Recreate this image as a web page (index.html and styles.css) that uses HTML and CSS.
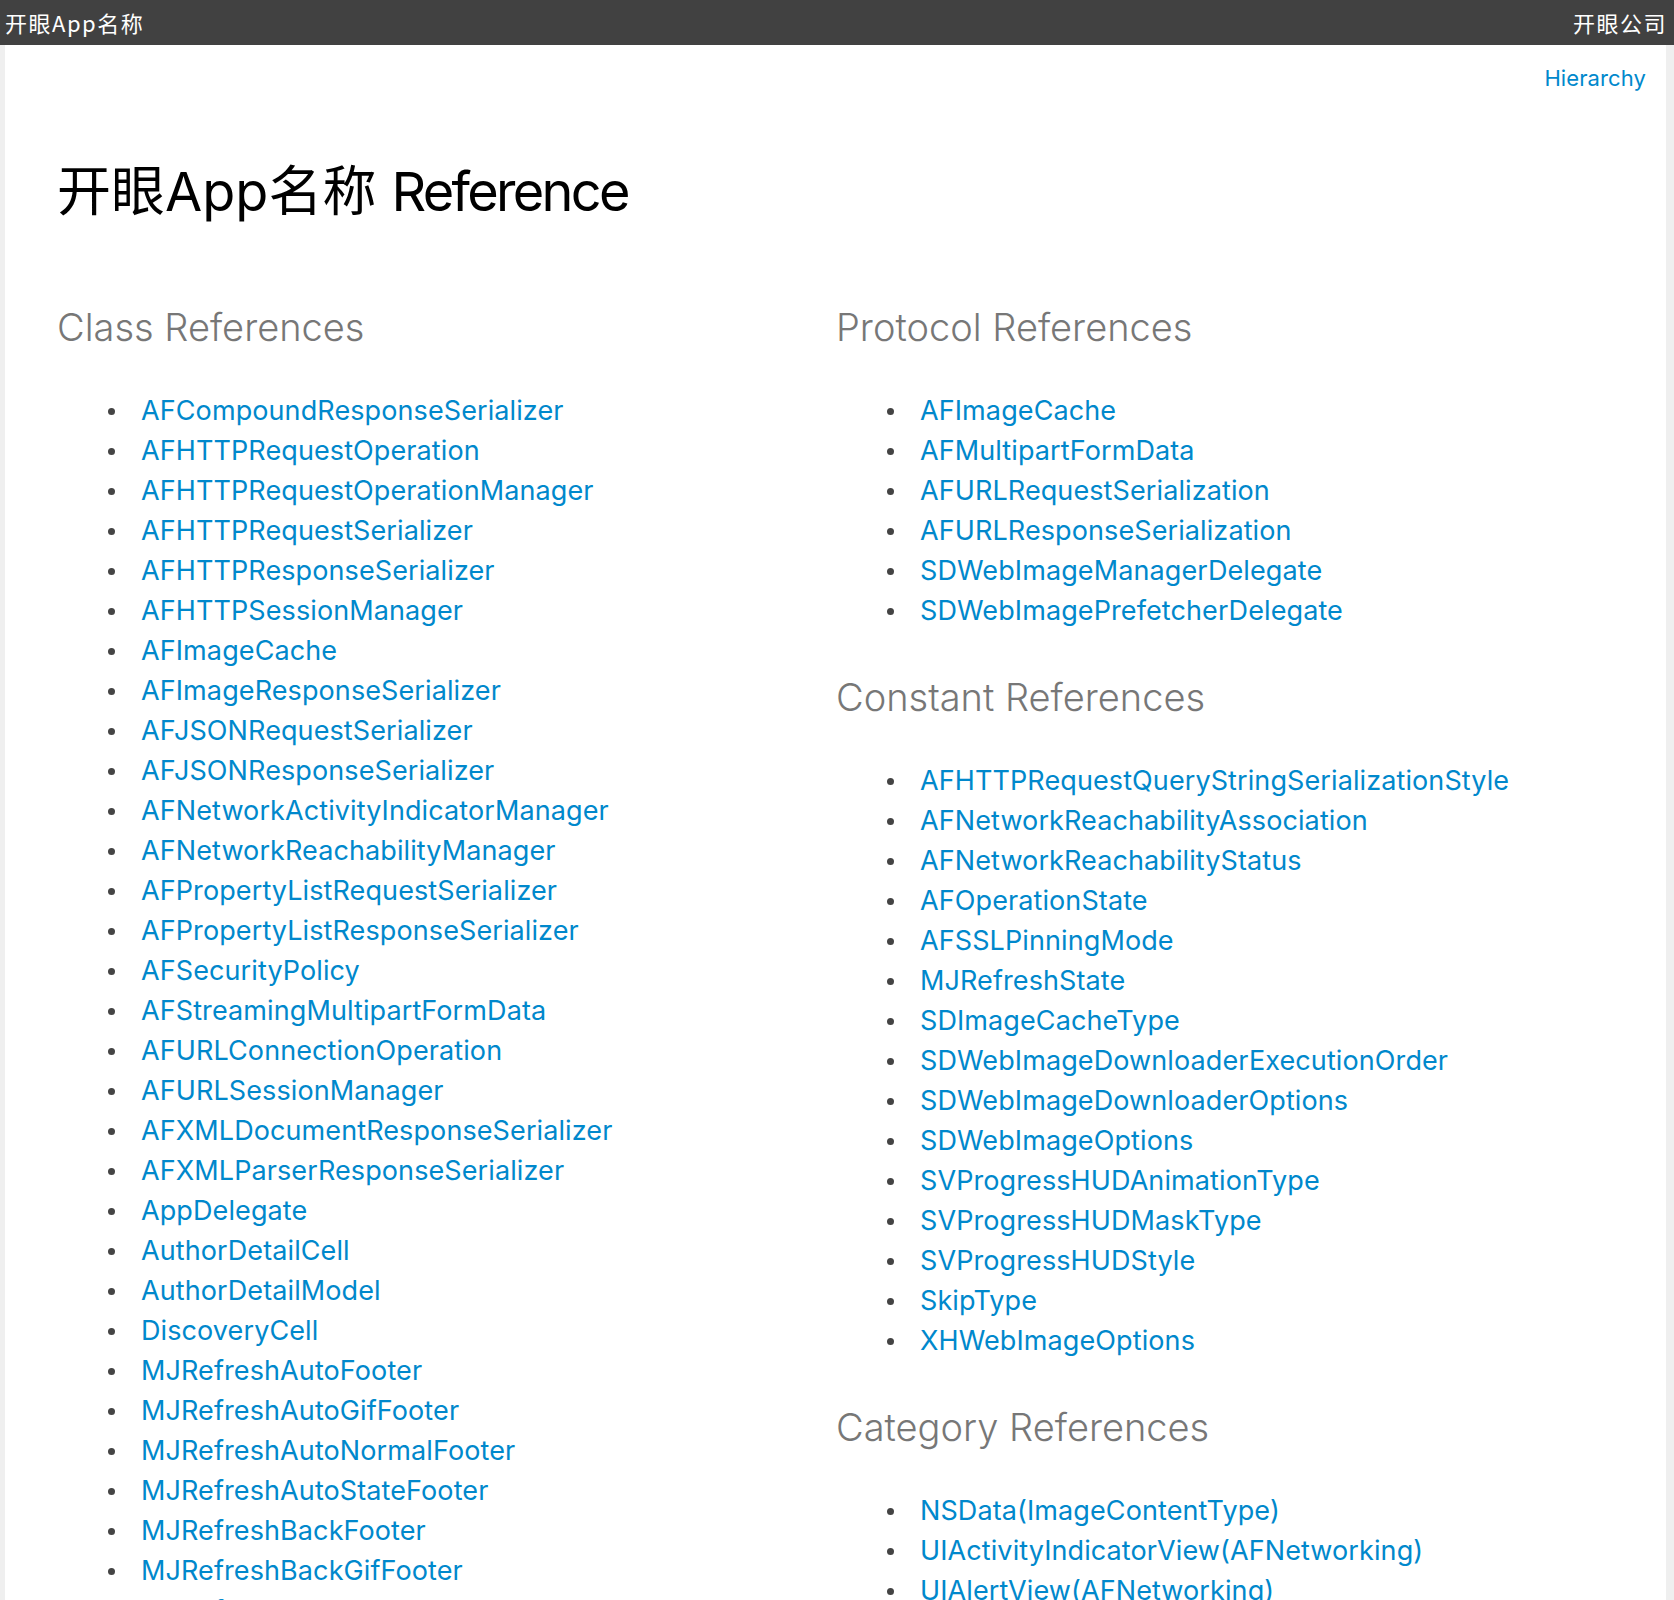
FILE: index.html
```html
<!DOCTYPE html>
<html lang="zh-CN">
<head>
<meta charset="utf-8">
<title>开眼App名称 Reference</title>
<link rel="stylesheet" href="styles.css">
</head>
<body>
<header class="topbar">
  <span class="topbar-title">开眼App名称</span>
  <span class="topbar-company">开眼公司</span>
</header>
<div class="page">
  <nav class="subnav"><a href="#">Hierarchy</a></nav>
  <main class="content">
    <h1 class="doc-title">开眼App名称 <span class="latin">Reference</span></h1>
    <div class="columns">
      <section class="column">
        <h2 class="section-title">Class References</h2>
        <ul class="ref-list">
          <li><a href="#">AFCompoundResponseSerializer</a></li>
          <li><a href="#">AFHTTPRequestOperation</a></li>
          <li><a href="#">AFHTTPRequestOperationManager</a></li>
          <li><a href="#">AFHTTPRequestSerializer</a></li>
          <li><a href="#">AFHTTPResponseSerializer</a></li>
          <li><a href="#">AFHTTPSessionManager</a></li>
          <li><a href="#">AFImageCache</a></li>
          <li><a href="#">AFImageResponseSerializer</a></li>
          <li><a href="#">AFJSONRequestSerializer</a></li>
          <li><a href="#">AFJSONResponseSerializer</a></li>
          <li><a href="#">AFNetworkActivityIndicatorManager</a></li>
          <li><a href="#">AFNetworkReachabilityManager</a></li>
          <li><a href="#">AFPropertyListRequestSerializer</a></li>
          <li><a href="#">AFPropertyListResponseSerializer</a></li>
          <li><a href="#">AFSecurityPolicy</a></li>
          <li><a href="#">AFStreamingMultipartFormData</a></li>
          <li><a href="#">AFURLConnectionOperation</a></li>
          <li><a href="#">AFURLSessionManager</a></li>
          <li><a href="#">AFXMLDocumentResponseSerializer</a></li>
          <li><a href="#">AFXMLParserResponseSerializer</a></li>
          <li><a href="#">AppDelegate</a></li>
          <li><a href="#">AuthorDetailCell</a></li>
          <li><a href="#">AuthorDetailModel</a></li>
          <li><a href="#">DiscoveryCell</a></li>
          <li><a href="#">MJRefreshAutoFooter</a></li>
          <li><a href="#">MJRefreshAutoGifFooter</a></li>
          <li><a href="#">MJRefreshAutoNormalFooter</a></li>
          <li><a href="#">MJRefreshAutoStateFooter</a></li>
          <li><a href="#">MJRefreshBackFooter</a></li>
          <li><a href="#">MJRefreshBackGifFooter</a></li>
          <li><a href="#">MJRefreshBackNormalFooter</a></li>
          <li><a href="#">MJRefreshBackStateFooter</a></li>
          <li><a href="#">MJRefreshComponent</a></li>
          <li><a href="#">MJRefreshFooter</a></li>
          <li><a href="#">MJRefreshGifHeader</a></li>
        </ul>
      </section>
      <section class="column">
        <h2 class="section-title">Protocol References</h2>
        <ul class="ref-list">
          <li><a href="#">AFImageCache</a></li>
          <li><a href="#">AFMultipartFormData</a></li>
          <li><a href="#">AFURLRequestSerialization</a></li>
          <li><a href="#">AFURLResponseSerialization</a></li>
          <li><a href="#">SDWebImageManagerDelegate</a></li>
          <li><a href="#">SDWebImagePrefetcherDelegate</a></li>
        </ul>
        <h2 class="section-title section-title--next">Constant References</h2>
        <ul class="ref-list">
          <li><a href="#">AFHTTPRequestQueryStringSerializationStyle</a></li>
          <li><a href="#">AFNetworkReachabilityAssociation</a></li>
          <li><a href="#">AFNetworkReachabilityStatus</a></li>
          <li><a href="#">AFOperationState</a></li>
          <li><a href="#">AFSSLPinningMode</a></li>
          <li><a href="#">MJRefreshState</a></li>
          <li><a href="#">SDImageCacheType</a></li>
          <li><a href="#">SDWebImageDownloaderExecutionOrder</a></li>
          <li><a href="#">SDWebImageDownloaderOptions</a></li>
          <li><a href="#">SDWebImageOptions</a></li>
          <li><a href="#">SVProgressHUDAnimationType</a></li>
          <li><a href="#">SVProgressHUDMaskType</a></li>
          <li><a href="#">SVProgressHUDStyle</a></li>
          <li><a href="#">SkipType</a></li>
          <li><a href="#">XHWebImageOptions</a></li>
        </ul>
        <h2 class="section-title section-title--next">Category References</h2>
        <ul class="ref-list">
          <li><a href="#">NSData(ImageContentType)</a></li>
          <li><a href="#">UIActivityIndicatorView(AFNetworking)</a></li>
          <li><a href="#">UIAlertView(AFNetworking)</a></li>
          <li><a href="#">UIButton(AFNetworking)</a></li>
          <li><a href="#">UIButton(WebCache)</a></li>
          <li><a href="#">UIImageView(AFNetworking)</a></li>
        </ul>
      </section>
    </div>
  </main>
</div>
</body>
</html>
```

FILE: styles.css
```css
html, body {
  margin: 0;
  padding: 0;
}

body {
  background: #efefef;
  font-family: Inter, "Liberation Sans", "Noto Sans CJK SC", sans-serif;
  color: #000;
}

a {
  color: #0088cc;
  text-decoration: none;
}

.topbar {
  height: 45px;
  background: #414141;
  color: #fff;
  display: flex;
  justify-content: space-between;
  align-items: center;
  padding: 0 7px 0 5px;
  font-family: "Noto Sans CJK SC", sans-serif;
  font-size: 22px;
  letter-spacing: 1.5px;
  line-height: 45px;
}

.page {
  background: #fff;
  margin: 0 8px 0 5px;
  min-height: 1700px;
}

.subnav {
  display: flex;
  justify-content: flex-end;
  padding: 18px 20px 0 0;
  font-size: 22px;
  line-height: 30px;
  letter-spacing: 0.1px;
}

.content {
  padding: 67px 51px 40px 52px;
}

.doc-title {
  margin: 0;
  font-family: Inter, "Noto Sans CJK SC", sans-serif;
  font-size: 54px;
  line-height: 64px;
  font-weight: 400;
  color: #000;
}

.doc-title .latin {
  letter-spacing: -2.7px;
}

.columns {
  display: grid;
  grid-template-columns: 1fr 1fr;
  margin-top: 81px;
}

.section-title {
  margin: 0;
  font-size: 38px;
  line-height: 44px;
  font-weight: 300;
  color: #777;
}

.section-title--next {
  margin-top: 44px;
}

.ref-list {
  list-style: none;
  margin: 42px 0 0;
  padding: 0 0 0 51px;
}

.ref-list li {
  display: flex;
  align-items: center;
  height: 40px;
  font-size: 27px;
  line-height: 40px;
  letter-spacing: 0.1px;
}

.ref-list li::before {
  content: "";
  flex: none;
  width: 7px;
  height: 7px;
  border-radius: 50%;
  background: #444;
  margin-right: 26px;
}
```
